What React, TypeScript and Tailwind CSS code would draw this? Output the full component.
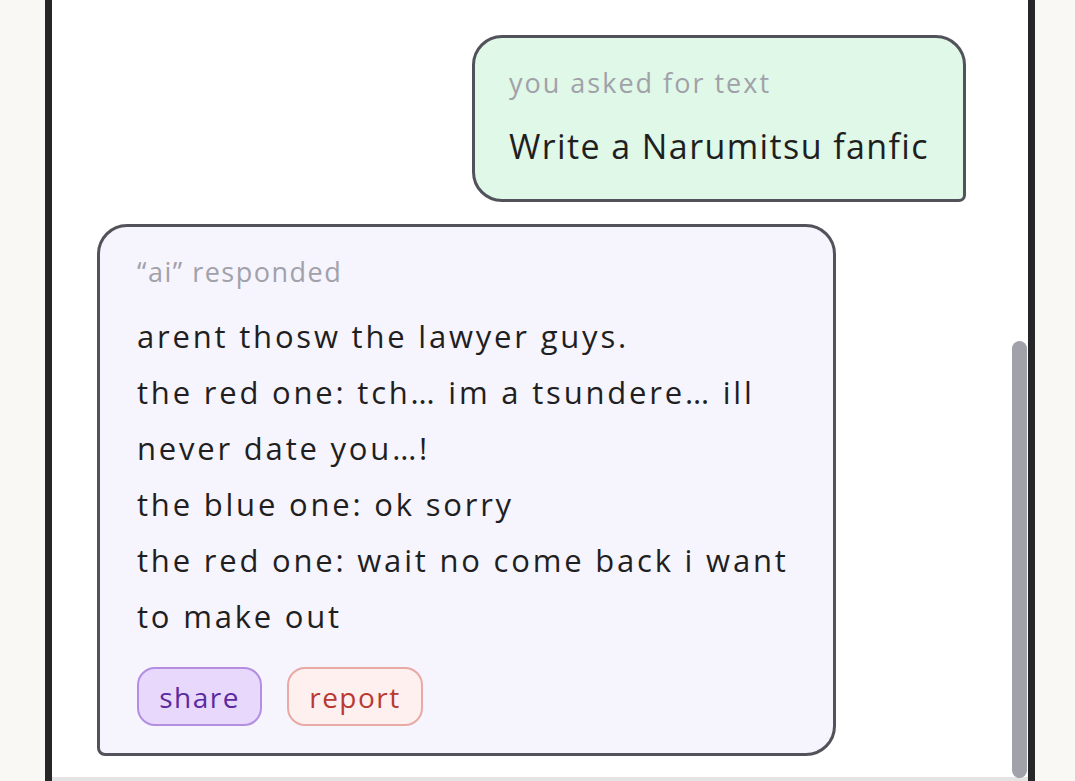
import React from "react";

const font = { fontFamily: '"Open Sans", "Noto Sans", sans-serif' };

const aiLines = [
  "arent thosw the lawyer guys.",
  "the red one: tch… im a tsundere… ill",
  "never date you…!",
  "the blue one: ok sorry",
  "the red one: wait no come back i want",
  "to make out",
];

export default function App() {
  return (
    <div className="flex h-[781px] w-full bg-[#f9f8f4] overflow-hidden" style={font}>
      <div className="ml-[45px] w-[990px] h-full border-x-[7px] border-[#27272a] bg-white relative flex flex-col">
        <div className="flex-1 flex flex-col pt-[35px] pl-[45px] pr-[62px]">
          <div className="self-end w-[494px] bg-[#e0f8e7] border-[3px] border-[#52525b] rounded-t-[30px] rounded-bl-[30px] rounded-br-[7px] pl-[34px] pt-[27px] pb-[29px]">
            <div className="text-[27px] leading-[36px] tracking-[2px] text-[#a1a1aa]">you asked for text</div>
            <div className="mt-[21px] text-[34px] leading-[48px] tracking-[1.4px] text-[#1f1f22]">Write a Narumitsu fanfic</div>
          </div>
          <div className="mt-[22px] w-[739px] bg-[#f6f4fd] border-[3px] border-[#52525b] rounded-t-[30px] rounded-br-[30px] rounded-bl-[8px] px-[37px] pt-[27px] pb-[27px]">
            <div className="text-[27px] leading-[36px] tracking-[1.5px] text-[#a1a1aa]">“ai” responded</div>
            <div className="mt-[18px] text-[31px] leading-[56px] tracking-[2.8px] text-[#1f1f22]">
              {aiLines.map((l) => (
                <div key={l} className="whitespace-nowrap">{l}</div>
              ))}
            </div>
            <div className="mt-[23px] flex gap-[25px]">
              <button className="h-[59px] w-[125px] rounded-[18px] bg-[#e8d8fc] border-2 border-[#b48ee0] text-[28px] tracking-[1.5px] text-[#5b2a9e]">share</button>
              <button className="h-[59px] w-[136px] rounded-[18px] bg-[#fdf0ef] border-2 border-[#e9a9a4] text-[28px] tracking-[1.5px] text-[#b83a32]">report</button>
            </div>
          </div>
        </div>
        <div className="h-[4px] bg-[#e4e4e4]" />
        <div className="absolute right-[1px] top-[341px] w-[15px] h-[437px] rounded-full bg-[#a1a1aa]" />
      </div>
    </div>
  );
}
